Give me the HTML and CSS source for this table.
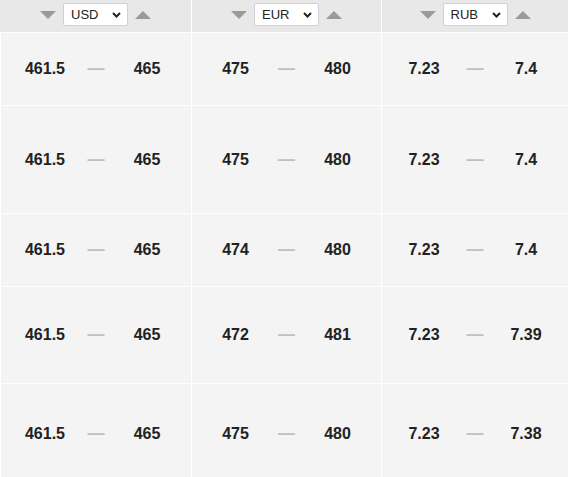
FILE: index.html
```html
<!DOCTYPE html>
<html>
<head>
<meta charset="utf-8">
<link rel="stylesheet" href="styles.css">
</head>
<body>
<div class="rates">
  <div class="head">
    <div class="sort"><span class="tri down"></span><div class="select"><span>USD</span><svg width="9" height="6" viewBox="0 0 9 6"><path d="M1 1 L4.5 4.5 L8 1" fill="none" stroke="#222" stroke-width="2"/></svg></div><span class="tri up"></span></div>
  </div>
  <div class="head">
    <div class="sort"><span class="tri down"></span><div class="select"><span>EUR</span><svg width="9" height="6" viewBox="0 0 9 6"><path d="M1 1 L4.5 4.5 L8 1" fill="none" stroke="#222" stroke-width="2"/></svg></div><span class="tri up"></span></div>
  </div>
  <div class="head">
    <div class="sort"><span class="tri down"></span><div class="select"><span>RUB</span><svg width="9" height="6" viewBox="0 0 9 6"><path d="M1 1 L4.5 4.5 L8 1" fill="none" stroke="#222" stroke-width="2"/></svg></div><span class="tri up"></span></div>
  </div>

  <div class="cell r1"><div class="pair"><b>461.5</b><i>—</i><b>465</b></div></div>
  <div class="cell r1"><div class="pair"><b>475</b><i>—</i><b>480</b></div></div>
  <div class="cell r1"><div class="pair"><b>7.23</b><i>—</i><b>7.4</b></div></div>

  <div class="cell r2"><div class="pair"><b>461.5</b><i>—</i><b>465</b></div></div>
  <div class="cell r2"><div class="pair"><b>475</b><i>—</i><b>480</b></div></div>
  <div class="cell r2"><div class="pair"><b>7.23</b><i>—</i><b>7.4</b></div></div>

  <div class="cell r3"><div class="pair"><b>461.5</b><i>—</i><b>465</b></div></div>
  <div class="cell r3"><div class="pair"><b>474</b><i>—</i><b>480</b></div></div>
  <div class="cell r3"><div class="pair"><b>7.23</b><i>—</i><b>7.4</b></div></div>

  <div class="cell r4"><div class="pair"><b>461.5</b><i>—</i><b>465</b></div></div>
  <div class="cell r4"><div class="pair"><b>472</b><i>—</i><b>481</b></div></div>
  <div class="cell r4"><div class="pair"><b>7.23</b><i>—</i><b>7.39</b></div></div>

  <div class="cell r5"><div class="pair"><b>461.5</b><i>—</i><b>465</b></div></div>
  <div class="cell r5"><div class="pair"><b>475</b><i>—</i><b>480</b></div></div>
  <div class="cell r5"><div class="pair"><b>7.23</b><i>—</i><b>7.38</b></div></div>
</div>
</body>
</html>
```

FILE: styles.css
```css
html, body {
  margin: 0;
  padding: 0;
  background: #ffffff;
  overflow: hidden;
}
body {
  font-family: "Liberation Sans", Arial, sans-serif;
  color: #222;
}
.rates {
  display: grid;
  grid-template-columns: 191px 189px 186px;
  grid-template-rows: 32px 72px 107px 72px 96px 100px;
  column-gap: 1px;
  row-gap: 1px;
  background: #ffffff;
  width: 568px;
}
.head {
  background: #e8e8e8;
  display: flex;
  align-items: center;
  justify-content: center;
}
.sort {
  display: flex;
  align-items: center;
  gap: 7px;
  margin-top: -3px;
}
.tri {
  width: 0;
  height: 0;
  border-left: 8px solid transparent;
  border-right: 8px solid transparent;
}
.tri.down {
  border-top: 8px solid #9a9a9a;
}
.tri.up {
  border-bottom: 8px solid #9a9a9a;
}
.select {
  box-sizing: border-box;
  width: 65px;
  height: 23px;
  background: #ffffff;
  border: 1px solid #c9d2de;
  border-radius: 2px;
  display: flex;
  align-items: center;
  justify-content: space-between;
  padding: 0 6px 0 7px;
  font-size: 13px;
  color: #222;
}
.cell {
  background: #f4f4f4;
  display: flex;
  align-items: center;
  justify-content: center;
}
.cell:nth-child(3n+1) {
  border-left: 1px solid #ffffff;
}
.pair {
  display: grid;
  grid-template-columns: 51px 51px 51px;
  align-items: center;
  margin-top: 0;
}
.pair b {
  font-weight: bold;
  font-size: 16px;
  text-align: center;
  color: #222;
}
.pair i {
  font-style: normal;
  font-weight: bold;
  font-size: 17px;
  text-align: center;
  color: #c0c0c0;
}
```
